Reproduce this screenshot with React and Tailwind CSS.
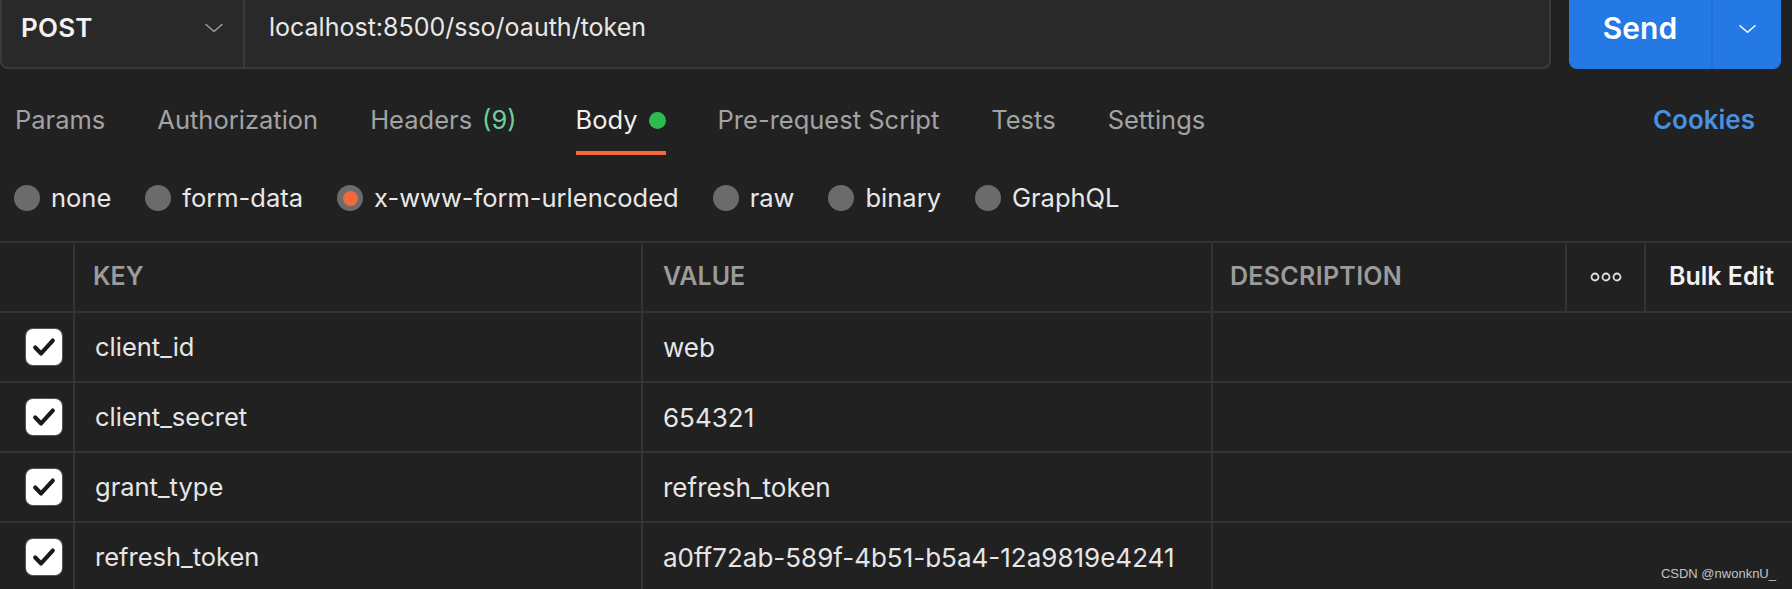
import React from "react";

const tabs = [
  { label: "Params" },
  { label: "Authorization" },
  { label: "Headers", count: "(9)" },
  { label: "Body", active: true, dot: true },
  { label: "Pre-request Script" },
  { label: "Tests" },
  { label: "Settings" },
];

const bodyTypes = [
  { label: "none" },
  { label: "form-data" },
  { label: "x-www-form-urlencoded", selected: true },
  { label: "raw" },
  { label: "binary" },
  { label: "GraphQL" },
];

const rows = [
  { key: "client_id", value: "web" },
  { key: "client_secret", value: "654321" },
  { key: "grant_type", value: "refresh_token" },
  { key: "refresh_token", value: "a0ff72ab-589f-4b51-b5a4-12a9819e4241" },
];

const Chevron = ({ className }) => (
  <svg viewBox="0 0 18 10" className={className} fill="none" stroke="currentColor" strokeWidth="1.6" strokeLinecap="round" strokeLinejoin="round">
    <polyline points="1,1.5 9,8.5 17,1.5" />
  </svg>
);

const Checkbox = () => (
  <div className="w-[36px] h-[36px] rounded-[7px] bg-white flex items-center justify-center shadow-[0_0_0_1px_#555]">
    <svg viewBox="0 0 24 24" className="w-[28px] h-[28px]" fill="none" stroke="#1a1a1a" strokeWidth="3.6" strokeLinecap="round" strokeLinejoin="round">
      <polyline points="4.5,12.5 9.5,17.5 19.5,6.5" />
    </svg>
  </div>
);

const cell = "border-r-2 border-[#333333] flex items-center";

export default function App() {
  return (
    <div className="relative w-[1792px] h-[589px] overflow-hidden bg-[#212121] font-['Inter','Noto_Sans',sans-serif]">
      {/* request bar */}
      <div className="flex h-[69px]">
        <div className="flex w-[1551px] bg-[#292929] border-2 border-t-0 border-[#3a3a3a] rounded-b-[8px]">
          <div className="w-[243px] flex items-center justify-between pl-[19px] pr-[20px] pb-[12px] border-r-2 border-[#3a3a3a]">
            <span className="text-[26px] font-semibold text-[#f2f2f2] tracking-[0.2px]">POST</span>
            <Chevron className="w-[18px] h-[10px] text-[#9a9a9a]" />
          </div>
          <div className="flex-1 flex items-center pl-[24px] pb-[12px]">
            <span className="text-[25px] text-[#e8e8e8]">localhost:8500/sso/oauth/token</span>
          </div>
        </div>
        <div className="ml-[18px] w-[212px] flex bg-[#2479e4] rounded-b-[8px]">
          <div className="w-[144px] flex items-center justify-center pb-[12px] border-r-2 border-[#1f6fd6]">
            <span className="text-[30px] font-semibold text-white">Send</span>
          </div>
          <div className="flex-1 flex items-center justify-center pb-[12px]">
            <Chevron className="w-[17px] h-[10px] text-white" />
          </div>
        </div>
      </div>

      {/* tabs */}
      <div className="flex items-start pt-[35px] pl-[15px] pr-[37px]">
        <div className="flex gap-[52px]">
          {tabs.map((t) => (
            <div key={t.label} className="flex flex-col">
              <div className="flex items-center h-[32px]">
                <span className={`text-[25.5px] leading-[32px] ${t.active ? "text-[#f0f0f0]" : "text-[#a3a3a3]"}`}>{t.label}</span>
                {t.count && <span className="ml-[10px] mr-[7px] text-[25.5px] leading-[32px] text-[#6fcf97]">{t.count}</span>}
                {t.dot && <span className="ml-[11px] w-[17px] h-[17px] rounded-full bg-[#2fba52]" />}
              </div>
              <div className={`mt-[15px] h-[4px] ${t.active ? "bg-[#f26b3a]" : "bg-transparent"}`} />
            </div>
          ))}
        </div>
        <span className="ml-auto text-[26px] leading-[32px] font-semibold text-[#4a90e2]">Cookies</span>
      </div>

      {/* body types */}
      <div className="flex items-center gap-[34px] pl-[14px] mt-[27px] h-[32px]">
        {bodyTypes.map((b) => (
          <div key={b.label} className="flex items-center gap-[11px]">
            <span className="w-[26px] h-[26px] rounded-full bg-[#6b6b6b] flex items-center justify-center">
              {b.selected && <span className="w-[15px] h-[15px] rounded-full bg-[#f26b3a]" />}
            </span>
            <span className="text-[25.5px] leading-[32px] text-[#e8e8e8]">{b.label}</span>
          </div>
        ))}
      </div>

      {/* table */}
      <div className="mt-[27px] border-t-2 border-[#333333]">
        <div className="grid grid-cols-[75px_568px_570px_354px_79px_1fr] h-[70px] border-b-2 border-[#333333]">
          <div className={cell} />
          <div className={`${cell} pl-[18px]`}>
            <span className="text-[25px] font-semibold text-[#9b9b9b]">KEY</span>
          </div>
          <div className={`${cell} pl-[20px]`}>
            <span className="text-[25px] font-semibold text-[#9b9b9b]">VALUE</span>
          </div>
          <div className={`${cell} pl-[17px]`}>
            <span className="text-[25px] font-semibold text-[#9b9b9b] tracking-[0.3px]">DESCRIPTION</span>
          </div>
          <div className={`${cell} justify-center`}>
            <svg viewBox="0 0 32 10" className="w-[32px] h-[10px]" fill="none" stroke="#e0e0e0" strokeWidth="1.8">
              <circle cx="5" cy="5" r="3.5" />
              <circle cx="16" cy="5" r="3.5" />
              <circle cx="27" cy="5" r="3.5" />
            </svg>
          </div>
          <div className="flex items-center pl-[23px]">
            <span className="text-[25px] font-semibold text-[#f2f2f2]">Bulk Edit</span>
          </div>
        </div>
        {rows.map((r) => (
          <div key={r.key} className="grid grid-cols-[75px_568px_570px_354px_79px_1fr] h-[70px] border-b-2 border-[#333333]">
            <div className={`${cell} justify-end pr-[11px]`}>
              <Checkbox />
            </div>
            <div className={`${cell} pl-[20px]`}>
              <span className="text-[25.5px] text-[#e6e6e6]">{r.key}</span>
            </div>
            <div className={`${cell} pl-[20px]`}>
              <span className="text-[26px] text-[#e6e6e6]">{r.value}</span>
            </div>
            <div className="col-span-3" />
          </div>
        ))}
      </div>

      <span className="absolute right-[16px] bottom-[6px] text-[13px] text-[#c4c4c4] font-['Liberation_Sans',sans-serif]">CSDN @nwonknU_</span>
    </div>
  );
}
